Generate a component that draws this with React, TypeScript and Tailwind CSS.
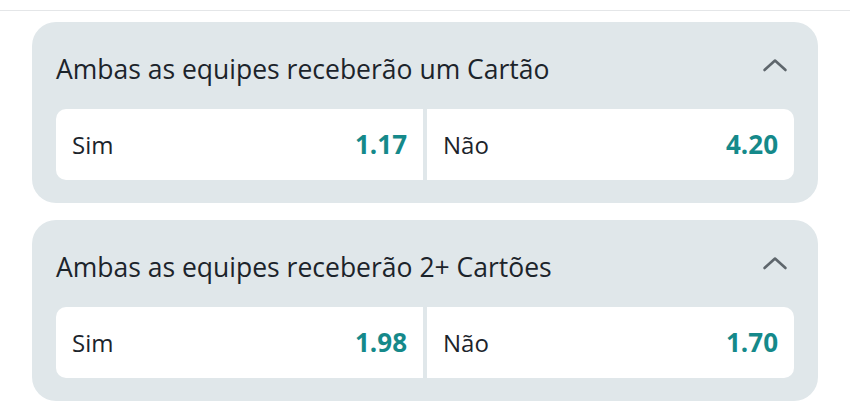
import React from "react";

interface Outcome {
  label: string;
  odd: string;
}

interface Market {
  title: string;
  outcomes: Outcome[];
}

const MARKETS: Market[] = [
  {
    title: "Ambas as equipes receberão um Cartão",
    outcomes: [
      { label: "Sim", odd: "1.17" },
      { label: "Não", odd: "4.20" },
    ],
  },
  {
    title: "Ambas as equipes receberão 2+ Cartões",
    outcomes: [
      { label: "Sim", odd: "1.98" },
      { label: "Não", odd: "1.70" },
    ],
  },
];

function ChevronUp() {
  return (
    <svg width="26" height="16" viewBox="0 0 26 16" fill="none" className="shrink-0 -mt-[9px]">
      <polyline
        points="2.5,13 13,3.5 23.5,13"
        stroke="#5e666c"
        strokeWidth="2.6"
        strokeLinecap="round"
        strokeLinejoin="round"
      />
    </svg>
  );
}

function MarketCard({ market }: { market: Market }) {
  return (
    <div className="rounded-[24px] bg-[#e0e7ea] px-6 pt-[31px] pb-[23px]">
      {/* cabeçalho */}
      <div className="flex items-center justify-between h-[32px] pr-[6px]">
        <span className="text-[26.5px] leading-[32px] font-medium text-[#1c242b]">
          {market.title}
        </span>
        <ChevronUp />
      </div>

      {/* odds */}
      <div className="mt-6 flex gap-1 h-[71px]">
        {market.outcomes.map((o, i) => (
          <button
            key={o.label}
            className={
              i === 0
                ? "flex-1 flex items-center justify-between bg-white rounded-l-[10px] pl-4 pr-4"
                : "flex-1 flex items-center justify-between bg-white rounded-r-[10px] pl-4 pr-4"
            }
          >
            <span className="text-[24px] text-[#1c242b]">{o.label}</span>
            <span className="text-[26px] font-bold text-[#15898a]">{o.odd}</span>
          </button>
        ))}
      </div>
    </div>
  );
}

export default function App() {
  return (
    <div className="w-[850px] h-[411px] bg-white font-['Open_Sans',sans-serif] overflow-hidden">
      <div className="h-[11px] border-b border-[#e4e6e8]" />
      <div className="flex flex-col gap-[17px] pl-8 pr-8 pt-[11px]">
        {MARKETS.map((m) => (
          <MarketCard key={m.title} market={m} />
        ))}
      </div>
    </div>
  );
}
